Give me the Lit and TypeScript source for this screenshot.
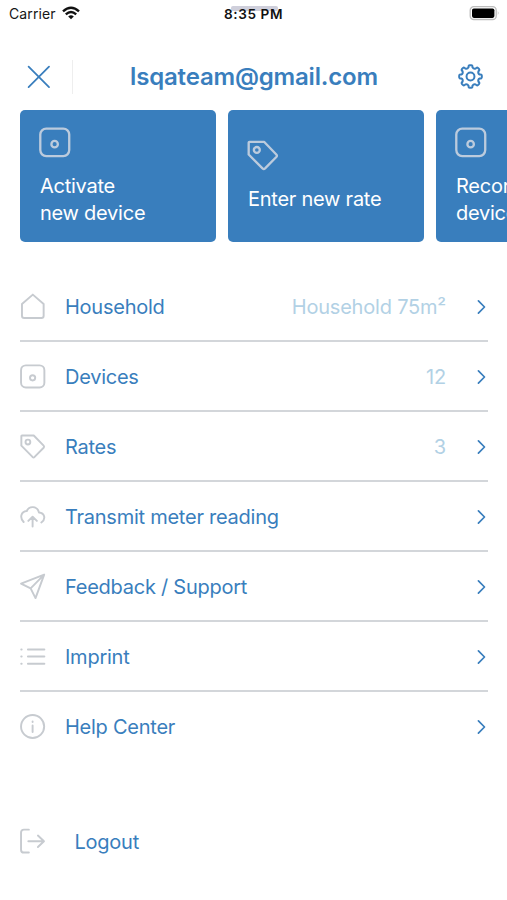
import { LitElement, html, css, svg, nothing } from "lit";
import { customElement, property } from "lit/decorators.js";

const gearPath = (() => {
  const pts: string[] = [];
  const teeth = 8;
  const at = (r: number, deg: number) => {
    const a = ((deg - 90) * Math.PI) / 180;
    return `${(12 + r * Math.cos(a)).toFixed(2)} ${(12 + r * Math.sin(a)).toFixed(2)}`;
  };
  for (let i = 0; i < teeth; i++) {
    const c = (i * 360) / teeth;
    pts.push(`${i ? "L" : "M"}${at(9, c - 12)}`);
    pts.push(`Q${at(11, c - 11)} ${at(10.9, c - 4)}`);
    pts.push(`L${at(10.9, c + 4)}`);
    pts.push(`Q${at(11, c + 11)} ${at(9, c + 12)}`);
    pts.push(`Q${at(7.6, c + 22.5)} ${at(9, c + 33)}`);
  }
  return pts.join("") + "Z";
})();

const device = svg`<rect x="1" y="1.3" width="22.4" height="21.2" rx="4.6"/><circle cx="12.1" cy="13.3" r="2.5"/>`;
const tag = svg`<path d="M1.3 2V11.2L12 22Q13 22.9 14 22L22.7 13.2Q23.6 12.2 22.7 11.2L13.2 1.4H1.9Q1.3 1.4 1.3 2Z"/><circle cx="7.6" cy="7.7" r="2.3"/>`;

const icons: Record<string, unknown> = {
  device,
  tag,
  home: svg`<path d="M1.9 9.6L12.3 .6L22.7 9.6V20.8Q22.7 23 20.6 23H4Q1.9 23 1.9 20.8Z"/>`,
  cloud: svg`<path d="M3.5 17.3C-.6 12.8 1 7.3 6.5 6.8C8.6 1.4 16.6 1.6 18.2 8.2C23.6 8.6 25.2 14.3 20.5 17.8M12.1 21.6V13M8 16.2L12.1 12.2L16.2 16.2"/>`,
  send: svg`<path d="M23.2 .6L1 9.2L10.2 13.8L14.9 23.1ZM23.2 .6L10.2 13.8"/>`,
  list: svg`<path d="M7.6 5.2H23.4M7.6 12H23.4M7.6 19H23.4M1.2 5.2H1.6M1.2 12H1.6M1.2 19H1.6"/>`,
  info: svg`<circle cx="12.1" cy="12" r="11.1"/><path d="M12.1 11V17.2M12.1 7.2V7.6"/>`,
  logout: svg`<path d="M8.5 .6H3.8Q1 .6 1 3.4V19.8Q1 22.6 3.8 22.6H8.5M8 11.8H22.8M17.2 6.3L23 11.8L17.2 17.3"/>`,
  gear: svg`<path d=${gearPath}/><circle cx="12" cy="12" r="3.8"/>`,
  close: svg`<path d="M2.5 2.5L22.1 22.1M22.1 2.5L2.5 22.1"/>`,
  chevron: svg`<path d="M8.7 6.4L14.3 12L8.7 17.6"/>`,
};

@customElement("line-icon")
class LineIcon extends LitElement {
  @property() name = "";
  static styles = css`
    :host { display: block; flex: none; width: 25px; height: 25px; }
    svg {
      display: block; width: 100%; height: 100%; overflow: visible; fill: none;
      stroke: currentColor; stroke-width: var(--stroke, 1.85);
      stroke-linecap: round; stroke-linejoin: round;
    }
  `;
  render() {
    return html`<svg viewBox="0 0 24 24">${icons[this.name]}</svg>`;
  }
}

const cards = [
  { icon: "device", lines: ["Activate", "new device"] },
  { icon: "tag", lines: ["Enter new rate"] },
  { icon: "device", lines: ["Record", "device"] },
];

const rows = [
  { icon: "home", label: "Household", value: "Household 75m²" },
  { icon: "device", label: "Devices", value: "12" },
  { icon: "tag", label: "Rates", value: "3" },
  { icon: "cloud", label: "Transmit meter reading" },
  { icon: "send", label: "Feedback / Support" },
  { icon: "list", label: "Imprint" },
  { icon: "info", label: "Help Center" },
];

@customElement("app-root")
class AppRoot extends LitElement {
  static styles = css`
    :host {
      display: block; width: 507px; height: 900px; overflow: hidden;
      background: #fff; color: #397ebd;
      font-family: Inter, "Liberation Sans", sans-serif;
      font-size: 20px; line-height: 27px; letter-spacing: -0.25px;
    }
    .status {
      display: grid; grid-template-columns: 1fr auto 1fr; align-items: center;
      height: 28px; padding: 0 7px 0 9px; color: #161616;
      font-size: 14px; line-height: 28px; letter-spacing: 0.1px;
    }
    .carrier { display: flex; align-items: center; gap: 6px; }
    .wifi { width: 18px; height: 14px; display: block; margin-top: -2px; }
    .time { position: relative; left: -1px; font-weight: 600; font-size: 13.6px; letter-spacing: 0.6px; color: #111; }
    .time span { position: relative; }
    .island { position: absolute; left: 7px; top: 6px; width: 47px; height: 5px; border-radius: 2px; background: #cfcfdb; }
    .battery { justify-self: end; display: block; width: 31px; height: 16px; margin-top: -2px; }
    .header { display: flex; align-items: center; height: 82px; padding: 15px 24px 0 26px; box-sizing: border-box; }
    .close { --stroke: 1.7; }
    .divider { width: 1px; height: 34px; margin-left: 21px; background: #eee; }
    .mail { flex: 1; padding-right: 23px; text-align: center; font-size: 24px; font-weight: 600; letter-spacing: -0.18px; }
    .gear { --stroke: 1.9; }
    .cards { display: flex; gap: 12px; padding-left: 20px; overflow: hidden; }
    .card {
      flex: none; width: 196px; height: 132px; box-sizing: border-box; padding: 1px 20px 0;
      display: flex; flex-direction: column; justify-content: center; gap: 15px;
      border-radius: 5px; background: #397ebd; color: #fff;
    }
    .card line-icon { width: 31px; height: 31px; margin-left: -1px; color: #bccbdd; --stroke: 1.8; }
    .card p { margin: 0; white-space: nowrap; }
    .list { margin: 30px 19px 0 20px; }
    .row { display: flex; align-items: center; height: 70px; box-sizing: border-box; padding-top: 1px; border-bottom: 2px solid #d3d6da; }
    .row:last-child { border-color: transparent; }
    .row line-icon, .logout line-icon { color: #c7cbd0; }
    .label { flex: 1; margin-left: 20px; padding-top: 1px; }
    .value { color: #b2d1e5; margin-right: 23px; padding-top: 1px; letter-spacing: -0.2px; }
    .row .chevron { color: #397ebd; width: 26px; height: 26px; margin-right: -7px; --stroke: 1.6; }
    .logout { display: flex; align-items: center; height: 40px; margin: 59px 0 0 20px; gap: 29.5px; }
    .logout span { padding-top: 2px; }
  `;
  render() {
    return html`
      <div class="status">
        <div class="carrier">Carrier
          <svg class="wifi" viewBox="0 0 18 14" fill="none" stroke="#111" stroke-width="2.4">
            <path d="M1 5.3Q9 -1.9 17 5.3M3.8 8.4Q9 3.8 14.2 8.4" />
            <path d="M9 13.2L6.2 10.4Q9 8.1 11.8 10.4Z" fill="#111" stroke="none" />
          </svg>
        </div>
        <div class="time"><i class="island"></i><span>8:35 PM</span></div>
        <svg class="battery" viewBox="0 0 31 16">
          <rect x="1.2" y="1.7" width="26" height="12.8" rx="3.6" fill="#fff" stroke="#bdbdbd" stroke-width="1.3" />
          <rect x="3" y="3.5" width="22.4" height="9.4" rx="1.8" fill="#000" />
          <path d="M28.8 6Q30.6 8.1 28.8 10.3Z" fill="#bdbdbd" />
        </svg>
      </div>
      <div class="header">
        <line-icon class="close" name="close"></line-icon>
        <div class="divider"></div>
        <div class="mail">lsqateam@gmail.com</div>
        <line-icon class="gear" name="gear"></line-icon>
      </div>
      <div class="cards">
        ${cards.map((c) => html`<div class="card">
          <line-icon name=${c.icon}></line-icon>
          <div>${c.lines.map((l) => html`<p>${l}</p>`)}</div>
        </div>`)}
      </div>
      <div class="list">
        ${rows.map((r) => html`<div class="row">
          <line-icon name=${r.icon}></line-icon>
          <span class="label">${r.label}</span>
          ${r.value ? html`<span class="value">${r.value}</span>` : nothing}
          <line-icon class="chevron" name="chevron"></line-icon>
        </div>`)}
      </div>
      <div class="logout"><line-icon name="logout"></line-icon><span>Logout</span></div>
    `;
  }
}
